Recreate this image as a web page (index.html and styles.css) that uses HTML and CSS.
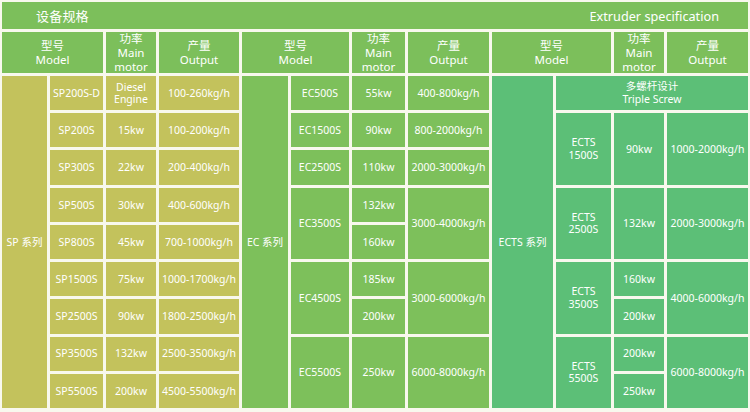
FILE: index.html
```html
<!DOCTYPE html>
<html lang="zh">
<head>
<meta charset="utf-8">
<link rel="stylesheet" href="styles.css">
</head>
<body>
<div class="sheet">
  <div class="title">
    <span class="title-cn">设备规格</span>
    <span class="title-en">Extruder specification</span>
  </div>
  <div class="sections">
    <div class="sec sec-sp">
      <div class="h span-c2">型号<br>Model</div>
      <div class="h">功率<br>Main<br>motor</div>
      <div class="h">产量<br>Output</div>
      <div class="c series">SP 系列</div>
      <div class="c">SP200S-D</div><div class="c">Diesel<br>Engine</div><div class="c">100-260kg/h</div>
      <div class="c">SP200S</div><div class="c">15kw</div><div class="c">100-200kg/h</div>
      <div class="c">SP300S</div><div class="c">22kw</div><div class="c">200-400kg/h</div>
      <div class="c">SP500S</div><div class="c">30kw</div><div class="c">400-600kg/h</div>
      <div class="c">SP800S</div><div class="c">45kw</div><div class="c">700-1000kg/h</div>
      <div class="c">SP1500S</div><div class="c">75kw</div><div class="c">1000-1700kg/h</div>
      <div class="c">SP2500S</div><div class="c">90kw</div><div class="c">1800-2500kg/h</div>
      <div class="c">SP3500S</div><div class="c">132kw</div><div class="c">2500-3500kg/h</div>
      <div class="c">SP5500S</div><div class="c">200kw</div><div class="c">4500-5500kg/h</div>
    </div>
    <div class="sec sec-ec">
      <div class="h span-c2">型号<br>Model</div>
      <div class="h">功率<br>Main<br>motor</div>
      <div class="h">产量<br>Output</div>
      <div class="c series">EC 系列</div>
      <div class="c">EC500S</div><div class="c">55kw</div><div class="c">400-800kg/h</div>
      <div class="c">EC1500S</div><div class="c">90kw</div><div class="c">800-2000kg/h</div>
      <div class="c">EC2500S</div><div class="c">110kw</div><div class="c">2000-3000kg/h</div>
      <div class="c span-r2">EC3500S</div><div class="c">132kw</div><div class="c span-r2">3000-4000kg/h</div>
      <div class="c">160kw</div>
      <div class="c span-r2">EC4500S</div><div class="c">185kw</div><div class="c span-r2">3000-6000kg/h</div>
      <div class="c">200kw</div>
      <div class="c span-r2">EC5500S</div><div class="c span-r2">250kw</div><div class="c span-r2">6000-8000kg/h</div>
    </div>
    <div class="sec sec-ects">
      <div class="h span-c2">型号<br>Model</div>
      <div class="h">功率<br>Main<br>motor</div>
      <div class="h">产量<br>Output</div>
      <div class="c series">ECTS 系列</div>
      <div class="c span-c3 triple">多螺杆设计<br>Triple Screw</div>
      <div class="c span-r2">ECTS<br>1500S</div><div class="c span-r2">90kw</div><div class="c span-r2">1000-2000kg/h</div>
      <div class="c span-r2">ECTS<br>2500S</div><div class="c span-r2">132kw</div><div class="c span-r2">2000-3000kg/h</div>
      <div class="c span-r2">ECTS<br>3500S</div><div class="c">160kw</div><div class="c span-r2">4000-6000kg/h</div>
      <div class="c">200kw</div>
      <div class="c span-r2">ECTS<br>5500S</div><div class="c">200kw</div><div class="c span-r2">6000-8000kg/h</div>
      <div class="c">250kw</div>
    </div>
  </div>
</div>
</body>
</html>
```
FILE: styles.css
```css
* { box-sizing: border-box; }
html, body { margin: 0; padding: 0; }
body {
  width: 750px;
  height: 412px;
  background: #f8f8ee;
  font-family: "Noto Sans", "Noto Sans CJK SC", sans-serif;
  color: #ffffff;
  overflow: hidden;
}
.sheet {
  padding: 2px;
  display: flex;
  flex-direction: column;
  gap: 3px;
  height: 410px;
}
.title {
  height: 27px;
  background: #7cbf5b;
  display: flex;
  align-items: center;
  justify-content: space-between;
  padding: 0 29px 0 34px;
  font-size: 13px;
}
.title-cn { font-weight: 400; letter-spacing: 0.2px; }
.title-en { font-weight: 400; font-size: 12.7px; }
.sections {
  display: flex;
  gap: 3px;
  height: 376px;
}
.sec {
  display: grid;
  grid-template-rows: 41px repeat(9, 1fr);
  gap: 3px;
  height: 376px;
}
.sec-sp { grid-template-columns: 45px 53px 50px 80px; width: 237px; }
.sec-ec { grid-template-columns: 46px 58px 53px 81px; width: 247px; }
.sec-ects { grid-template-columns: 61px 55px 50px 81px; width: 256px; }
.h {
  background: #7cbf5b;
  display: flex;
  align-items: center;
  justify-content: center;
  text-align: center;
  font-size: 11.5px;
  line-height: 14px;
}
.c {
  display: flex;
  align-items: center;
  justify-content: center;
  text-align: center;
  font-size: 10.5px;
  line-height: 12.5px;
  font-weight: 400;
}
.sec-sp .c { background: #c3c25c; }
.sec-ec .c { background: #7dc05b; }
.sec-ects .c { background: #5cbf77; }
.series { grid-row: span 9; }
.span-c2 { grid-column: span 2; }
.span-c3 { grid-column: span 3; }
.span-r2 { grid-row: span 2; }
.triple { line-height: 13px; }
```
